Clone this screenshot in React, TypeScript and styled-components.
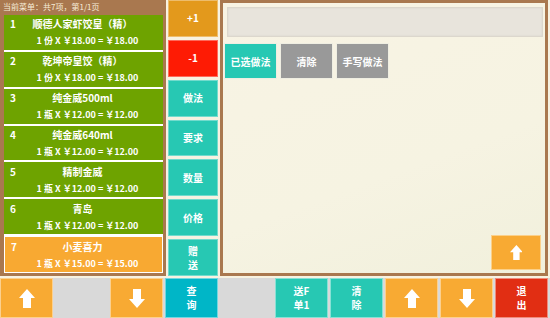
import React from "react";
import styled, { createGlobalStyle } from "styled-components";

const Global = createGlobalStyle`
  html, body { margin: 0; padding: 0; background: #f7f2e1; }
  body { font-family: "Noto Sans CJK SC", "Noto Sans", sans-serif; }
  * { box-sizing: border-box; }
`;

const Page = styled.div`
  width: 550px;
  height: 318px;
  display: flex;
  flex-direction: column;
  gap: 2px;
  background: #f7f2e1;
  overflow: hidden;
`;

const TopRow = styled.div`
  height: 276px;
  display: flex;
  gap: 2px;
`;

const LeftPanel = styled.div`
  width: 166px;
  background: #a9784f;
  padding: 0 3px 3px 4px;
  display: flex;
  flex-direction: column;
`;

const Header = styled.div`
  height: 15px;
  color: #f6ecd8;
  font-size: 8px;
  line-height: 14px;
  margin-left: -1px;
  white-space: nowrap;
`;

const List = styled.div`
  flex: 1;
  display: flex;
  flex-direction: column;
  gap: 2px;
  background: #fff;
`;

const Item = styled.div<{ $selected?: boolean }>`
  flex: 1;
  background: ${(p) => (p.$selected ? "#f8a932" : "#6ea300")};
  border: ${(p) => (p.$selected ? "1px solid #fff" : "none")};
  color: #fff;
  font-weight: 700;
  font-size: 10px;
  display: flex;
  flex-direction: column;
  justify-content: center;
  gap: 4px;
  padding: 0 4px 0 6px;
`;

const ItemLine = styled.div`
  display: flex;
  align-items: center;
  height: 13px;
  line-height: 13px;
  white-space: nowrap;
`;

const ItemNo = styled.span`
  width: 14px;
`;

const ItemName = styled.span`
  flex: 1;
  text-align: center;
  padding-right: 18px;
`;

const ItemPrice = styled.span`
  flex: 1;
  text-align: center;
  font-size: 9px;
  padding-left: 6px;
`;

const MidCol = styled.div`
  width: 50px;
  display: flex;
  flex-direction: column;
  gap: 3px;
`;

const MidBtn = styled.div<{ $bg: string }>`
  flex: 1;
  background: ${(p) => p.$bg};
  border: 1px solid rgba(255, 255, 255, 0.35);
  color: #fff;
  font-weight: 700;
  font-size: 10px;
  line-height: 14px;
  display: flex;
  align-items: center;
  justify-content: center;
  text-align: center;
  white-space: pre-line;
`;

const RightPanel = styled.div`
  width: 328px;
  border: 3px solid #a9784f;
  background: linear-gradient(160deg, #f8f3e4 0%, #f6f3e2 60%, #f1f0dc 100%);
  display: flex;
  flex-direction: column;
  padding: 4px 2px 3px 1px;
`;

const InputBox = styled.div`
  height: 30px;
  margin-left: 3px;
  background: #e8e4dc;
  border: 1px solid #dcd7cd;
  box-shadow: inset 0 0 2px rgba(0, 0, 0, 0.08);
`;

const BtnRow = styled.div`
  display: flex;
  gap: 3px;
  margin-top: 6px;
`;

const ActionBtn = styled.div<{ $bg: string }>`
  width: 53px;
  height: 36px;
  background: ${(p) => p.$bg};
  border: 1px solid #efeee2;
  color: #fff;
  font-weight: 700;
  font-size: 10px;
  display: flex;
  align-items: center;
  justify-content: center;
`;

const ScrollUp = styled.div`
  margin-top: auto;
  align-self: flex-end;
  margin-right: 2px;
  width: 50px;
  height: 35px;
  background: #f8aa33;
  border: 1px solid #fbd08a;
  display: flex;
  align-items: center;
  justify-content: center;
`;

const BottomBar = styled.div`
  height: 40px;
  display: grid;
  grid-template-columns: repeat(10, 55px);
  background: #d9d9d9;
`;

const BarBtn = styled.div<{ $bg?: string }>`
  background: ${(p) => p.$bg ?? "transparent"};
  border: ${(p) => (p.$bg ? "1px solid rgba(255,255,255,0.45)" : "none")};
  margin-right: ${(p) => (p.$bg ? "2px" : "0")};
  color: #fff;
  font-weight: 700;
  font-size: 10px;
  line-height: 14px;
  display: flex;
  align-items: center;
  justify-content: center;
  text-align: center;
  white-space: pre-line;
`;

const Arrow = ({ down, size = 1 }: { down?: boolean; size?: number }) => (
  <svg
    width={16 * size}
    height={19 * size}
    viewBox="0 0 16 19"
    style={{ transform: down ? "rotate(180deg)" : undefined }}
  >
    <polygon points="8,0 16,9 12,9 12,19 4,19 4,9 0,9" fill="#fff" />
  </svg>
);

const items = [
  { no: 1, name: "顺德人家虾饺皇（精）", price: "1 份 X ￥18.00 = ￥18.00" },
  { no: 2, name: "乾坤帝皇饺（精）", price: "1 份 X ￥18.00 = ￥18.00" },
  { no: 3, name: "纯金威500ml", price: "1 瓶 X ￥12.00 = ￥12.00" },
  { no: 4, name: "纯金威640ml", price: "1 瓶 X ￥12.00 = ￥12.00" },
  { no: 5, name: "精制金威", price: "1 瓶 X ￥12.00 = ￥12.00" },
  { no: 6, name: "青岛", price: "1 瓶 X ￥12.00 = ￥12.00" },
  { no: 7, name: "小麦喜力", price: "1 瓶 X ￥15.00 = ￥15.00", selected: true },
];

const mid = [
  { t: "+1", bg: "#e3991c" },
  { t: "-1", bg: "#fe1b04" },
  { t: "做法", bg: "#27c8b3" },
  { t: "要求", bg: "#27c8b3" },
  { t: "数量", bg: "#27c8b3" },
  { t: "价格", bg: "#27c8b3" },
  { t: "赠\n送", bg: "#27c8b3" },
];

export default function App() {
  return (
    <Page>
      <Global />
      <TopRow>
        <LeftPanel>
          <Header>当前菜单：共7项，第1/1页</Header>
          <List>
            {items.map((it) => (
              <Item key={it.no} $selected={it.selected}>
                <ItemLine>
                  <ItemNo>{it.no}</ItemNo>
                  <ItemName>{it.name}</ItemName>
                </ItemLine>
                <ItemLine>
                  <ItemPrice>{it.price}</ItemPrice>
                </ItemLine>
              </Item>
            ))}
          </List>
        </LeftPanel>
        <MidCol>
          {mid.map((m) => (
            <MidBtn key={m.t} $bg={m.bg}>
              {m.t}
            </MidBtn>
          ))}
        </MidCol>
        <RightPanel>
          <InputBox />
          <BtnRow>
            <ActionBtn $bg="#27c8b3">已选做法</ActionBtn>
            <ActionBtn $bg="#999999">清除</ActionBtn>
            <ActionBtn $bg="#999999">手写做法</ActionBtn>
          </BtnRow>
          <ScrollUp>
            <Arrow size={0.8} />
          </ScrollUp>
        </RightPanel>
      </TopRow>
      <BottomBar>
        <BarBtn $bg="#f8aa33">
          <Arrow />
        </BarBtn>
        <BarBtn />
        <BarBtn $bg="#f8aa33">
          <Arrow down />
        </BarBtn>
        <BarBtn $bg="#00b6c7">{"查\n询"}</BarBtn>
        <BarBtn />
        <BarBtn $bg="#27c8b3">{"送F\n单1"}</BarBtn>
        <BarBtn $bg="#27c8b3">{"清\n除"}</BarBtn>
        <BarBtn $bg="#f8aa33">
          <Arrow />
        </BarBtn>
        <BarBtn $bg="#f8aa33">
          <Arrow down />
        </BarBtn>
        <BarBtn $bg="#e12e13">{"退\n出"}</BarBtn>
      </BottomBar>
    </Page>
  );
}
